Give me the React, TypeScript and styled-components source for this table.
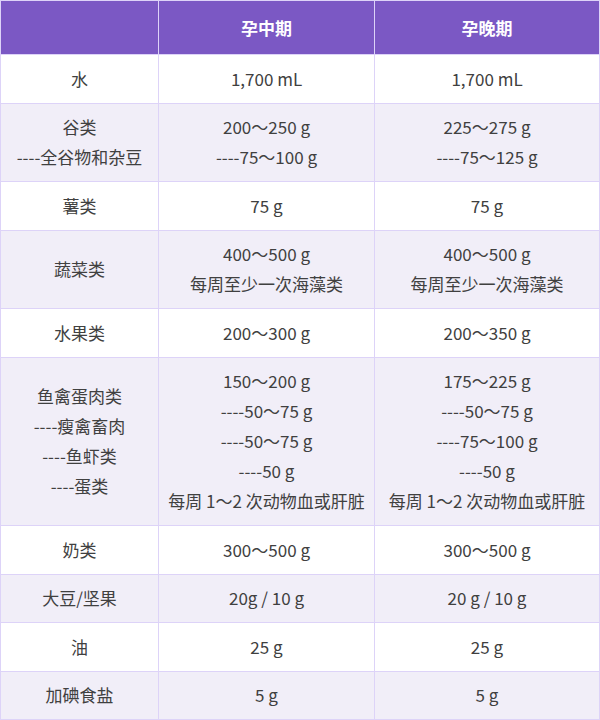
import React from "react"
import styled, { createGlobalStyle } from "styled-components"

const GlobalStyle = createGlobalStyle`
  html, body {
    margin: 0;
    padding: 0;
    background: #ffffff;
  }
  body {
    font-family: "Noto Sans CJK SC", "Noto Sans", sans-serif;
  }
`

const Table = styled.table`
  width: 599px;
  border-collapse: collapse;
  table-layout: fixed;
  color: #404040;
  font-size: 17px;
  line-height: 30px;
  text-align: center;
`

const HeadCell = styled.th`
  background-color: #7b58c4;
  color: #ffffff;
  font-weight: 700;
  padding: 12px 4px 11px;
  border: 1px solid #ddd3f8;
`

const Row = styled.tr<{ $shade: boolean }>`
  background-color: ${p => (p.$shade ? "#f1eef8" : "#ffffff")};
`

const Cell = styled.td`
  padding: 8.5px 4px 9px;
  border: 1px solid #ddd3f8;
  vertical-align: middle;
  white-space: nowrap;
`

const Line = styled.div`
  display: block;
`

interface Item {
  name: string[]
  mid: string[]
  late: string[]
}

const items: Item[] = [
  { name: ["水"], mid: ["1,700 mL"], late: ["1,700 mL"] },
  {
    name: ["谷类", "----全谷物和杂豆"],
    mid: ["200～250 g", "----75～100 g"],
    late: ["225～275 g", "----75～125 g"],
  },
  { name: ["薯类"], mid: ["75 g"], late: ["75 g"] },
  {
    name: ["蔬菜类"],
    mid: ["400～500 g", "每周至少一次海藻类"],
    late: ["400～500 g", "每周至少一次海藻类"],
  },
  { name: ["水果类"], mid: ["200～300 g"], late: ["200～350 g"] },
  {
    name: ["鱼禽蛋肉类", "----瘦禽畜肉", "----鱼虾类", "----蛋类"],
    mid: ["150～200 g", "----50～75 g", "----50～75 g", "----50 g", "每周 1～2 次动物血或肝脏"],
    late: ["175～225 g", "----50～75 g", "----75～100 g", "----50 g", "每周 1～2 次动物血或肝脏"],
  },
  { name: ["奶类"], mid: ["300～500 g"], late: ["300～500 g"] },
  { name: ["大豆/坚果"], mid: ["20g / 10 g"], late: ["20 g / 10 g"] },
  { name: ["油"], mid: ["25 g"], late: ["25 g"] },
  { name: ["加碘食盐"], mid: ["5 g"], late: ["5 g"] },
]

const Lines = ({ lines }: { lines: string[] }) => (
  <>
    {lines.map((l, i) => (
      <Line key={i}>{l}</Line>
    ))}
  </>
)

const App = () => {
  return (
    <>
      <GlobalStyle />
      <Table>
        <colgroup>
          <col style={{ width: 158 }} />
          <col style={{ width: 216 }} />
          <col style={{ width: 225 }} />
        </colgroup>
        <thead>
          <tr>
            <HeadCell></HeadCell>
            <HeadCell>孕中期</HeadCell>
            <HeadCell>孕晚期</HeadCell>
          </tr>
        </thead>
        <tbody>
          {items.map((it, i) => (
            <Row key={it.name[0]} $shade={i % 2 === 1}>
              <Cell><Lines lines={it.name} /></Cell>
              <Cell><Lines lines={it.mid} /></Cell>
              <Cell><Lines lines={it.late} /></Cell>
            </Row>
          ))}
        </tbody>
      </Table>
    </>
  )
}

export default App
